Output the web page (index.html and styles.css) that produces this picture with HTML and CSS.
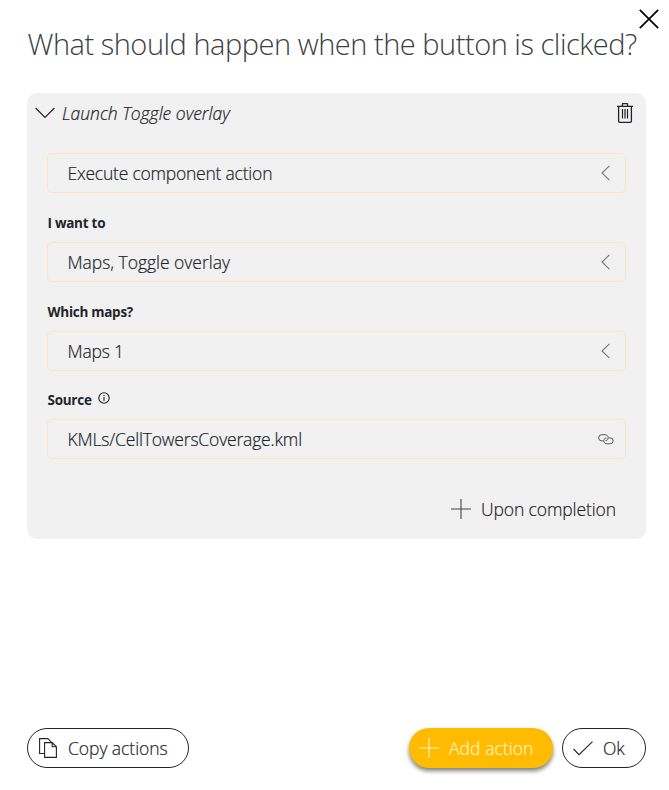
FILE: index.html
```html
<!DOCTYPE html>
<html lang="en">
<head>
<meta charset="utf-8">
<title>Button actions</title>
<link rel="stylesheet" href="styles.css">
</head>
<body>
<main class="dialog">
  <button class="close" aria-label="Close"><svg width="20" height="20" viewBox="0 0 20 20"><path d="M.8.8 19.2 19.2M19.2.8.8 19.2"/></svg></button>
  <h1 class="title"><span>What should happen when the button is clicked?</span></h1>
  <section class="card">
    <header class="card-head">
      <svg class="chevron" width="20" height="12" viewBox="0 0 20 12"><path d="M.6 1 10 10.4 19.4 1"/></svg>
      <span class="card-name">Launch Toggle overlay</span>
      <svg class="trash" width="16" height="20" viewBox="0 0 16 20"><path d="M0 3.4h16M5.4 3V1.2q0-.6.6-.6h4q.6 0 .6.6V3M1.6 3.5v14.6q0 1.2 1.2 1.2h10.4q1.2 0 1.2-1.2V3.5"/><path class="slats" d="M5.5 6v9.5M8 6v9.5M10.5 6v9.5"/></svg>
    </header>
    <div class="field"><span class="v1">Execute component action</span><svg class="arrow" width="9" height="16" viewBox="0 0 9 16"><path d="M8.4.8 1 8l7.4 7.2"/></svg></div>
    <div class="label"><span class="l1">I want to</span></div>
    <div class="field"><span class="v2">Maps, Toggle overlay</span><svg class="arrow" width="9" height="16" viewBox="0 0 9 16"><path d="M8.4.8 1 8l7.4 7.2"/></svg></div>
    <div class="label"><span class="l2">Which maps?</span></div>
    <div class="field"><span class="v3">Maps 1</span><svg class="arrow" width="9" height="16" viewBox="0 0 9 16"><path d="M8.4.8 1 8l7.4 7.2"/></svg></div>
    <div class="label source"><span class="l3">Source</span><svg class="info" width="12" height="12" viewBox="0 0 12 12"><circle cx="6" cy="6" r="5.2"/><path d="M6 5v4M6 3v1.1"/></svg></div>
    <div class="field"><span class="v4">KMLs/CellTowersCoverage.kml</span><svg class="link" width="16" height="11" viewBox="0 0 16 11"><path d="M5 6.900H3.800a3.100 3.100 0 0 1 0-6.200h3.400a3.100 3.100 0 0 1 2.600 4.700Q9 6.700 7.500 6.500M11 3.900h1.200a2.950 2.950 0 0 1 0 5.900H8.800a3 3 0 0 1-2.700-4.500Q7 3.900 8.500 4"/></svg></div>
    <div class="completion"><svg class="plus" width="20" height="20" viewBox="0 0 20 20"><path d="M0 10h20M10 0v20"/></svg><span class="c1">Upon completion</span></div>
  </section>
  <footer class="actions">
    <button class="btn copy"><svg width="18" height="20" viewBox="0 0 18 20"><path d="M5.500 15.500H.6V.6h8.200l3.500 3.500M5.600 4.600h7.600l4.200 4.200v10.600H5.600zM13.200 4.600v4.200h4.200"/></svg><span class="b1">Copy actions</span></button>
    <button class="btn add"><svg width="20" height="20" viewBox="0 0 20 20"><path d="M0 10h20M10 0v20"/></svg><span class="b2">Add action</span></button>
    <button class="btn ok"><svg width="20" height="15" viewBox="0 0 20 15"><path d="M.5 8 6 13.700 19.500.6"/></svg><span class="b3">Ok</span></button>
  </footer>
</main>
</body>
</html>
```
FILE: styles.css
```css
* { box-sizing: border-box; }
body {
  margin: 0;
  background: #fff;
  color: #212529;
  font-family: "Open Sans", "Noto Sans", sans-serif;
  font-size: 17.500px;
  font-weight: 300;
}
svg { display: block; flex: none; fill: none; stroke: #212529; stroke-width: 1.100; }
span { white-space: nowrap; }
button { font: inherit; color: inherit; background: none; border: 0; padding: 0; }
.dialog { position: relative; height: 790px; padding: 23px 23px 22px 27px; display: flex; flex-direction: column; }
.close { position: absolute; left: 639px; top: 9px; }
.close svg { stroke: #000; stroke-width: 1.700; }
.title { margin: 0 0 28px; height: 42px; line-height: 42px; font-size: 29px; font-weight: 300; letter-spacing: -.48px; color: #3c4044; padding-left: .5px; }
.card { height: 446px; background: #f1f1f1; border-radius: 10px; padding: 0 20px; }
.card-head { display: flex; align-items: center; height: 40px; margin: 0 -8px 20px -12px; }
.card-name { font-style: italic; margin-left: 7px; flex: 1; }
.card-name, .field span, .completion span, .btn span { -webkit-text-stroke: .2px currentColor; }
.chevron { stroke-width: 1.200; }
.trash { margin-right: 1px; stroke-width: 1.300; }
.slats { stroke-width: 1.200; }
.field { display: flex; align-items: center; justify-content: space-between; height: 40px; border: 1px solid #f8e8be; border-radius: 5px; padding: 0 15px 0 19.500px; }
.v1 { letter-spacing: -.22px; }
.v2 { letter-spacing: -.03px; }
.v3 { letter-spacing: -.2px; }
.v4 { letter-spacing: -.17px; }
.arrow { stroke: #777; }
.link { margin-right: -4px; stroke: #555; stroke-width: 1; }
.label { display: flex; height: 49px; padding: 20px 0 0 .5px; line-height: 20px; font-size: 13.500px; font-weight: 700; letter-spacing: -.27px; }
.source { height: 48px; padding-top: 19px; }
.info { margin: 2px 0 0 6px; }
.completion { display: flex; align-items: center; justify-content: flex-end; height: 30px; margin-top: 35px; padding-right: 10px; gap: 10px; }
.c1 { letter-spacing: -.1px; }
.plus { stroke: #444; }
.actions { display: flex; height: 40px; margin-top: auto; }
.btn { display: flex; align-items: center; height: 40px; border: 1px solid #212529; border-radius: 20px; }
.copy { width: 162px; padding-left: 11px; gap: 11px; letter-spacing: -.05px; }
.add { width: 144px; margin-left: auto; padding-left: 10px; gap: 10px; border: 0; color: #fff3c9; background: #ffbb00; box-shadow: 0 3px 4px rgba(0,0,0,.5); letter-spacing: .06px; }
.add svg { stroke: #fff3c9; }
.ok { width: 84px; margin-left: 9px; padding-left: 10px; gap: 10px; }
```
